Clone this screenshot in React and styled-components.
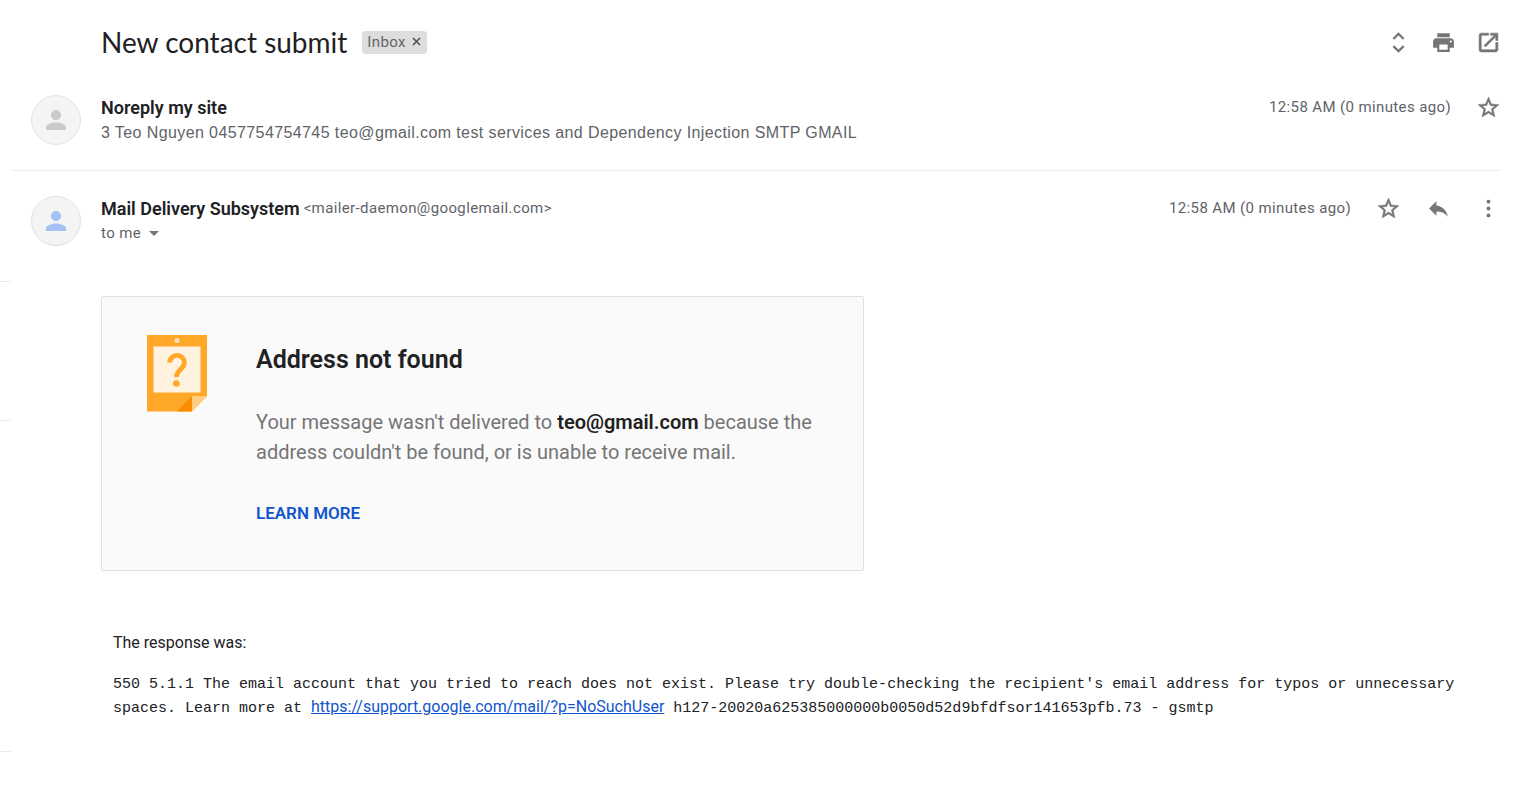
import React from "react";
import styled, { createGlobalStyle } from "styled-components";

const Global = createGlobalStyle`
  * { box-sizing: border-box; }
  body { margin: 0; background: #fff; color: #202124; font-family: Roboto, "Liberation Sans", sans-serif; }
  h1, h2, p { margin: 0; }
  button { border: 0; padding: 0; background: none; font: inherit; color: inherit; cursor: pointer; }
`;

const Page = styled.div`
  display: grid;
  grid-template-columns: 11px minmax(0, 1fr);
  min-height: 100vh;
`;

const Rail = styled.aside`
  display: flex;
  flex-direction: column;
  padding-top: 281px;
`;

const RailItem = styled.div`
  height: ${(p) => p.$height}px;
  border-top: 1px solid #e9ebeb;
`;

const Thread = styled.main`
  padding-right: 25px;
  min-width: 0;
`;

const Header = styled.header`
  display: flex;
  align-items: center;
  height: 70px;
  padding: 15px 0 0 90px;
`;

const Subject = styled.h1`
  padding-bottom: 2px;
  font-family: Lato, sans-serif;
  font-size: 28px;
  line-height: 36px;
  font-weight: 400;
`;

const Label = styled.span`
  display: flex;
  align-items: center;
  gap: 6px;
  height: 23px;
  margin-left: 15px;
  padding: 0 6px 2px 5px;
  border-radius: 4px;
  background: #ddd;
  color: #666;
  font-size: 15px;
  letter-spacing: 0.025em;
`;

const LabelRemove = styled.button`
  display: flex;
`;

const Actions = styled.div`
  display: flex;
  align-items: center;
  gap: ${(p) => p.$gap}px;
  margin-left: auto;
`;

const IconButton = styled.button`
  display: flex;
  width: 25px;
  height: 25px;
  color: #757575;
`;

const Message = styled.article`
  display: grid;
  grid-template-columns: 50px minmax(0, 1fr);
  column-gap: 20px;
  padding: 25px 0 25px 20px;
  border-bottom: ${(p) => (p.$divided ? "1px solid #eceeee" : "0")};
`;

const Avatar = styled.div`
  display: flex;
  align-items: center;
  justify-content: center;
  width: 50px;
  height: 50px;
  border: 1px solid ${(p) => (p.$blue ? "#dde1ea" : "#e4e4e4")};
  border-radius: 50%;
  background: #f4f4f4;
  color: ${(p) => (p.$blue ? "#a5c2f7" : "#cacaca")};
`;

const TopLine = styled.div`
  display: flex;
  align-items: center;
  height: 25px;
`;

const Sender = styled.h2`
  font-size: 18px;
  line-height: 25px;
  font-weight: 600;
`;

const Small = styled.span`
  margin-left: ${(p) => p.$start || 0}px;
  color: #5f6368;
  font-size: 15px;
  line-height: 25px;
  letter-spacing: 0.025em;
`;

const Snippet = styled.p`
  color: #5f6368;
  font-family: "Liberation Sans", Arial, sans-serif;
  font-size: 16px;
  line-height: 25px;
  letter-spacing: 0.025em;
`;

const Recipients = styled.button`
  display: flex;
  align-items: center;
  gap: 8px;
  color: #5f6368;
`;

const Body = styled.section`
  padding: 25px 0 40px 90px;
`;

const Bounce = styled.section`
  display: grid;
  grid-template-columns: 60px minmax(0, 1fr);
  column-gap: 49px;
  max-width: 763px;
  padding: 38px 45px 42px;
  border: 1px solid #e0e0e0;
  border-radius: 2px;
  background: #fafafa;
`;

const BounceText = styled.div`
  padding-top: 10px;
`;

const BounceTitle = styled.h2`
  font-size: 25px;
  line-height: 30px;
  font-weight: 600;
`;

const Explanation = styled.p`
  padding: 32px 0 31px;
  color: #757575;
  font-size: 20px;
  line-height: 30px;
  strong { color: #212121; font-weight: 600; }
`;

const LearnMore = styled.a`
  display: inline-block;
  color: #1155cc;
  font-size: 17px;
  line-height: 30px;
  font-weight: 600;
  text-decoration: none;
`;

const Response = styled.div`
  padding: 60px 12px 0;
`;

const ResponseTitle = styled.p`
  font-size: 16px;
  line-height: 24px;
`;

const ResponseText = styled.p`
  padding-top: 18px;
  font-family: "Liberation Mono", monospace;
  font-size: 15px;
  line-height: 24px;
`;

const Link = styled.a`
  color: #1155cc;
  font-family: Roboto, sans-serif;
  font-size: 16px;
  line-height: 16px;
`;

const icons = {
  expand: "M12 5.200 16.200 9.300l1.500-1.500L12 2.200 6.300 7.800l1.500 1.500L12 5.200zm0 13.600L7.800 14.700l-1.500 1.500L12 21.800l5.700-5.600-1.500-1.500L12 18.800z",
  print: "M19 8H5c-1.66 0-3 1.34-3 3v6h4v4h12v-4h4v-6c0-1.66-1.34-3-3-3zm-3 11H8v-5h8v5zm3-7c-.55 0-1-.45-1-1s.45-1 1-1 1 .45 1 1-.45 1-1 1zm-1-9H6v4h12V3z",
  open: "M19 19H5V5h7V3H5a2 2 0 0 0-2 2v14a2 2 0 0 0 2 2h14c1.1 0 2-.9 2-2v-7h-2v7zM14 3v2h3.59l-9.83 9.83 1.41 1.41L19 6.41V10h2V3h-7z",
  star: "M22 9.24l-7.19-.62L12 2 9.19 8.63 2 9.24l5.46 4.73L5.82 21 12 17.27 18.18 21l-1.63-7.03L22 9.24zM12 15.4l-3.76 2.27 1-4.28-3.32-2.88 4.38-.38L12 6.1l1.71 4.04 4.38.38-3.32 2.88 1 4.28L12 15.4z",
  reply: "M10 9V5l-7 7 7 7v-4.100c5 0 8.500 1.600 11 5.100-1-5-4-10-11-11z",
  more: "M12 3.500a1.900 1.900 0 1 0 0 3.800 1.900 1.900 0 0 0 0-3.800zm0 6.600a1.900 1.900 0 1 0 0 3.800 1.900 1.900 0 0 0 0-3.800zm0 6.600a1.900 1.900 0 1 0 0 3.800 1.900 1.900 0 0 0 0-3.800z",
  person: "M12 12c2.210 0 4-1.790 4-4s-1.790-4-4-4-4 1.790-4 4 1.790 4 4 4zm0 2c-2.670 0-8 1.340-8 4v2h16v-2c0-2.660-5.330-4-8-4z",
};

const heavy = { star: 0.5, open: 0.6 };

const Icon = ({ name, size = 25 }) => (
  <svg
    width={size}
    height={size}
    viewBox="0 0 24 24"
    fill="currentColor"
    stroke="currentColor"
    strokeWidth={heavy[name] || 0}
    aria-hidden="true"
  >
    <path d={icons[name]} />
  </svg>
);

const Action = ({ name, label }) => (
  <IconButton type="button" aria-label={label}>
    <Icon name={name} />
  </IconButton>
);

const NoteArt = () => (
  <svg width="60" height="77" viewBox="0 0 60 77" aria-hidden="true">
    <path d="M0 0h60v61L45 76.500H0z" fill="#ffa726" />
    <path d="M45 61v15.500H30z" fill="#fb8c00" />
    <path d="M45 61h15L45 76.500z" fill="#ffcc80" />
    <circle cx="30" cy="5.500" r="2.600" fill="#ffe0b2" />
    <path d="M6.500 11.500h47v46h-47z" fill="#fff3e0" />
    <path d="M22.600 27.500a7.400 7.200 0 0 1 14.800 0c0 6.500-8 7-8 14.500" fill="none" stroke="#ffa726" strokeWidth="4.800" />
    <circle cx="29.400" cy="48.500" r="3.300" fill="#ffa726" />
  </svg>
);

export default function App() {
  return (
    <>
      <Global />
      <Page>
        <Rail aria-hidden="true">
          <RailItem $height={139} />
          <RailItem $height={331} />
          <RailItem $height={33} />
        </Rail>
        <Thread>
          <Header>
            <Subject>New contact submit</Subject>
            <Label>
              Inbox
              <LabelRemove type="button" aria-label="Remove label Inbox">
                <svg width="9" height="9" viewBox="0 0 9 9" stroke="#555" strokeWidth="1.700" aria-hidden="true">
                  <path d="M1 1l7 7M8 1L1 8" />
                </svg>
              </LabelRemove>
            </Label>
            <Actions $gap={20}>
              <Action name="expand" label="Expand all" />
              <Action name="print" label="Print all" />
              <Action name="open" label="In new window" />
            </Actions>
          </Header>

          <Message $divided>
            <Avatar><Icon name="person" size={30} /></Avatar>
            <div>
              <TopLine>
                <Sender>Noreply my site</Sender>
                <Actions $gap={25}>
                  <Small>12:58 AM (0 minutes ago)</Small>
                  <Action name="star" label="Star" />
                </Actions>
              </TopLine>
              <Snippet>3 Teo Nguyen 0457754754745 teo@gmail.com test services and Dependency Injection SMTP GMAIL</Snippet>
            </div>
          </Message>

          <Message>
            <Avatar $blue><Icon name="person" size={30} /></Avatar>
            <div>
              <TopLine>
                <Sender>Mail Delivery Subsystem</Sender>
                <Small $start={4}>&lt;mailer-daemon@googlemail.com&gt;</Small>
                <Actions $gap={25}>
                  <Small>12:58 AM (0 minutes ago)</Small>
                  <Action name="star" label="Star" />
                  <Action name="reply" label="Reply" />
                  <Action name="more" label="More" />
                </Actions>
              </TopLine>
              <Recipients type="button" aria-label="Show details">
                <Small>to me</Small>
                <svg width="10" height="5" viewBox="0 0 10 5" fill="#757575" aria-hidden="true">
                  <path d="M0 0h10L5 5z" />
                </svg>
              </Recipients>
            </div>
          </Message>

          <Body>
            <Bounce>
              <NoteArt />
              <BounceText>
                <BounceTitle>Address not found</BounceTitle>
                <Explanation>
                  Your message wasn't delivered to <strong>teo@gmail.com</strong> because the address couldn't be
                  found, or is unable to receive mail.
                </Explanation>
                <LearnMore href="#learn-more">LEARN MORE</LearnMore>
              </BounceText>
            </Bounce>
            <Response>
              <ResponseTitle>The response was:</ResponseTitle>
              <ResponseText>
                550 5.1.1 The email account that you tried to reach does not exist. Please try double-checking the
                recipient's email address for typos or unnecessary spaces. Learn more at{" "}
                <Link href="https://support.google.com/mail/?p=NoSuchUser">
                  https://support.google.com/mail/?p=NoSuchUser
                </Link>{" "}
                h127-20020a625385000000b0050d52d9bfdfsor141653pfb.73 - gsmtp
              </ResponseText>
            </Response>
          </Body>
        </Thread>
      </Page>
    </>
  );
}
